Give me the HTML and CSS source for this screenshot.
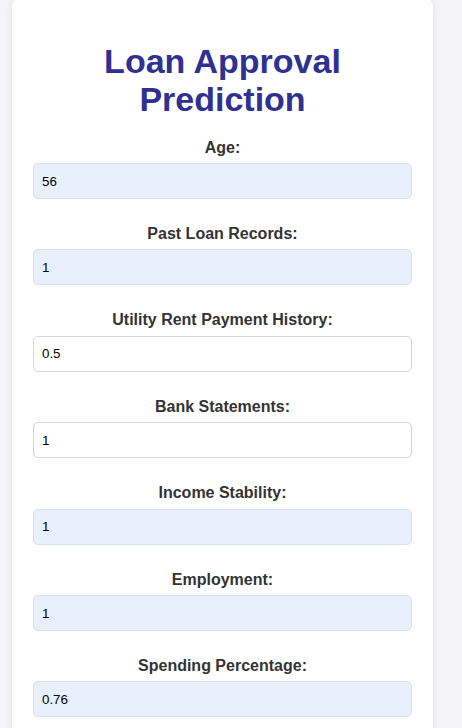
FILE: index.html
```html
<!DOCTYPE html>
<html>
<head>
<meta charset="utf-8">
<title>Loan Approval Prediction</title>
<link rel="stylesheet" href="styles.css">
</head>
<body>
<div class="card">
  <h1 class="title">Loan Approval Prediction</h1>
  <form class="form">
    <div class="field">
      <label class="label">Age:</label>
      <input class="input filled" type="text" value="56">
    </div>
    <div class="field">
      <label class="label">Past Loan Records:</label>
      <input class="input filled" type="text" value="1">
    </div>
    <div class="field">
      <label class="label">Utility Rent Payment History:</label>
      <input class="input" type="text" value="0.5">
    </div>
    <div class="field">
      <label class="label">Bank Statements:</label>
      <input class="input" type="text" value="1">
    </div>
    <div class="field">
      <label class="label">Income Stability:</label>
      <input class="input filled" type="text" value="1">
    </div>
    <div class="field">
      <label class="label">Employment:</label>
      <input class="input filled" type="text" value="1">
    </div>
    <div class="field">
      <label class="label">Spending Percentage:</label>
      <input class="input filled" type="text" value="0.76">
    </div>
  </form>
</div>
</body>
</html>
```

FILE: styles.css
```css
html, body {
  margin: 0;
  padding: 0;
  background: #f4f4f9;
  font-family: "Liberation Sans", Arial, sans-serif;
  overflow: hidden;
}

.card {
  width: 421px;
  box-sizing: border-box;
  margin: -3px 0 0 12px;
  padding: 45px 21px 40px;
  background: #ffffff;
  border-radius: 10px;
  box-shadow: 0 0 10px rgba(0, 0, 0, 0.08);
}

.title {
  margin: 0 0 20.6px;
  text-align: center;
  color: #2e3192;
  font-size: 34px;
  line-height: 38px;
  font-weight: bold;
}

.form {
  display: flex;
  flex-direction: column;
  gap: 26px;
}

.field {
  display: flex;
  flex-direction: column;
}

.label {
  display: block;
  text-align: center;
  font-size: 16px;
  line-height: 18.4px;
  font-weight: bold;
  color: #333333;
  margin-bottom: 6px;
}

.input {
  box-sizing: border-box;
  width: 100%;
  height: 36px;
  margin: 0;
  padding: 0 8px;
  border: 1px solid #d6d6d6;
  border-radius: 5px;
  background: #ffffff;
  font-family: "Liberation Sans", Arial, sans-serif;
  font-size: 13.333px;
  color: #000000;
  outline: none;
}

.input.filled {
  background: #e8f0fe;
  border-color: #d9dfe8;
}
```
